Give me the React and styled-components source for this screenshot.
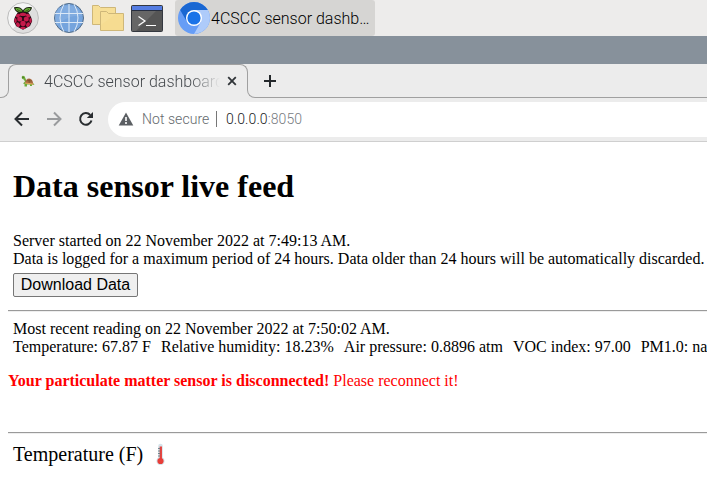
import React from "react";
import styled, { createGlobalStyle } from "styled-components";

const GlobalStyle = createGlobalStyle`
  html, body { margin: 0; padding: 0; overflow: hidden; background: #fff; }
  * { box-sizing: border-box; }
`;

const Screen = styled.div`
  width: 707px;
  height: 496px;
  overflow: hidden;
  background: #fff;
  color: #000;
  font-family: "Liberation Serif", serif;
`;

const Taskbar = styled.div`
  display: flex;
  align-items: center;
  height: 36px;
  padding-left: 6px;
  background: #edeceb;
`;

const Launcher = styled.div`
  display: flex;
  width: ${(p) => p.$w || 32}px;
  height: 36px;
  margin-right: ${(p) => p.$gap || 0}px;
  svg { display: block; }
`;

const TaskButton = styled.div`
  display: flex;
  align-items: center;
  width: 200px;
  height: 36px;
  padding-left: 3px;
  border-radius: 3px;
  background: #d6d5d3;
  svg { flex: none; }
`;

const TaskLabel = styled.span`
  font: 300 16px/36px Roboto, sans-serif;
  white-space: nowrap;
  margin-left: 1px;
  padding-top: 1px;
`;

const TitleBar = styled.div`
  height: 28px;
  background: #87919b;
`;

const TabStrip = styled.div`
  display: flex;
  height: 34px;
  background: #ececec;
`;

const StripEdge = styled.div`
  align-self: flex-end;
  height: 17px;
  border-bottom: 1px solid #a0a0a0;
  ${(p) =>
    p.$left
      ? "width: 9px; margin-right: -1px; border-right: 1px solid #a0a0a0; border-bottom-right-radius: 8px;"
      : "flex: 1; margin-left: -1px; border-left: 1px solid #a0a0a0; border-bottom-left-radius: 8px;"}
`;

const Tab = styled.div`
  display: flex;
  align-items: center;
  width: 240px;
  height: 17px;
  padding: 16px 10px 0 12px;
  border: 1px solid #a0a0a0;
  border-bottom: 0;
  border-radius: 8px 8px 0 0;
  svg { flex: none; }
`;

const TabTitle = styled.span`
  width: 176px;
  margin: 0 7px 0 9px;
  padding-top: 1px;
  overflow: hidden;
  white-space: nowrap;
  color: #45494d;
  font: 300 16px/24px Roboto, sans-serif;
  mask-image: linear-gradient(to right, #000 146px, transparent 176px);
`;

const NewTab = styled.div`
  align-self: flex-start;
  width: 14px;
  height: 14px;
  margin: 10px -29px 0 15px;
  svg { display: block; }
`;

const Toolbar = styled.div`
  display: flex;
  align-items: center;
  height: 44px;
  padding: 0 0 2px 14px;
  border-bottom: 1px solid #cfcfcf;
  background: #ececec;
`;

const NavIcon = styled.div`
  width: 16px;
  height: 16px;
  margin-right: 16px;
  svg { display: block; }
`;

const AddressBar = styled.div`
  display: flex;
  align-items: center;
  flex: 1;
  height: 35px;
  margin: 2px 0 0 -2px;
  padding: 0 0 1px 10px;
  border-radius: 18px 0 0 18px;
  background: #fff;
  font: 300 14px/20px Roboto, sans-serif;
  white-space: nowrap;
`;

const Security = styled.span`
  width: 75px;
  margin-left: 8px;
  padding-right: 7px;
  border-right: 1px solid #777;
  color: #65696d;
  line-height: 16px;
  letter-spacing: 0.06px;
`;

const Url = styled.span`
  margin-left: 9px;
  color: #202124;
  letter-spacing: 0.08px;
  span { color: #777b7f; }
`;

const Page = styled.main`
  padding-left: 8px;
  font-size: 16px;
  line-height: 18px;
  white-space: nowrap;
`;

const Title = styled.h1`
  margin: 0 0 27px 5px;
  padding-top: 26px;
  font-size: 32px;
  line-height: 37px;
`;

const Line = styled.div`
  margin-left: 5px;
`;

const Download = styled.button`
  display: block;
  width: 125px;
  height: 24px;
  margin: 5px 0 0 5px;
  padding: 0;
  border: 1px solid #767676;
  border-radius: 2px;
  background: #efefef;
  color: #000;
  font: 16px/20px "Liberation Sans", Arial, sans-serif;
`;

const Rule = styled.hr`
  height: 2px;
  margin: ${(p) => p.$top}px 0 8px;
  border: 0;
  border-top: 1px solid #9a9a9a;
  border-bottom: 1px solid #eee;
`;

const Readings = styled.div`
  display: flex;
  gap: 10px;
  margin-left: 5px;
`;

const Warning = styled.p`
  margin: 16px 0 0;
  color: #f00;
`;

const Section = styled.div`
  display: flex;
  align-items: center;
  margin: 9px 0 0 5px;
  font-size: 20px;
  line-height: 23px;
  svg { margin: -2px 0 0 10px; }
`;

function Raspberry() {
  return (
    <svg width="34" height="36" viewBox="0 0 34 36">
      <defs>
        <linearGradient id="disc" x2="1" y2="1">
          <stop offset=".5" stopColor="#f5f5f5" />
          <stop offset=".52" stopColor="#dedede" />
        </linearGradient>
      </defs>
      <circle cx="17" cy="18" r="15.4" fill="url(#disc)" stroke="#bbb" />
      <path d="M17 12C13 14 9 11 8.6 7.8C12 7 16 8 17 12C18 8 22 7 25.4 7.8C25 11 21 14 17 12Z" fill="#65ad35" stroke="#161b0b" strokeWidth="1.1" />
      <path d="M11 9.5L16 12M23 9.5L18 12" stroke="#315917" />
      <path d="M17 12.2L22.5 12.8L25 17L26.2 21L24 26L17 29.8L10 26L7.8 21L9 17L11.5 12.8Z" fill="#260812" />
      <g fill="#c51a4a">
        <ellipse cx="17" cy="14.4" rx="3.3" ry="1.7" />
        <ellipse cx="12" cy="15.6" rx="2.3" ry="1.6" transform="rotate(-35 12 15.6)" />
        <ellipse cx="22" cy="15.6" rx="2.3" ry="1.6" transform="rotate(35 22 15.6)" />
        <circle cx="13.7" cy="19" r="2.5" />
        <circle cx="20.3" cy="19" r="2.5" />
        <ellipse cx="9.5" cy="20.6" rx="1.2" ry="2.5" />
        <ellipse cx="24.5" cy="20.6" rx="1.2" ry="2.5" />
        <circle cx="17" cy="23.5" r="2.7" />
        <ellipse cx="12" cy="24.6" rx="1.8" ry="2.5" transform="rotate(-28 12 24.6)" />
        <ellipse cx="22" cy="24.6" rx="1.8" ry="2.5" transform="rotate(28 22 24.6)" />
        <ellipse cx="17" cy="28" rx="2.7" ry="1.2" />
      </g>
    </svg>
  );
}

function Globe() {
  return (
    <svg width="32" height="36" viewBox="0 0 32 36">
      <circle cx="16" cy="18" r="14.5" fill="#75a4dd" stroke="#526b86" />
      <path d="M5 8C14 3 25 5 30 16C22 15 10 18 4 26C1 19 1 13 5 8" fill="#8bb2e2" opacity=".55" />
      <path d="M2 13.5H30M2 22.5H30M16 4V32M11 4Q3 18 11 32M21 4Q29 18 21 32" fill="none" stroke="#dbe8f6" strokeWidth="1" />
    </svg>
  );
}

function Folders() {
  return (
    <svg width="32" height="36" viewBox="0 0 32 36" fill="#f7df97" stroke="#ceb779">
      <path d="M.5 24.5V5.5H6.5L8.5 7.5H23.5V24.5Z" />
      <path d="M8.5 30.5V11.5H14.5L16.5 13.5H31.5V30.5Z" />
      <path d="M9 25L24 14H31V30H9Z" fill="#f5d98a" stroke="none" opacity=".45" />
    </svg>
  );
}

function Terminal() {
  return (
    <svg width="32" height="36" viewBox="0 0 32 36">
      <rect x=".5" y="5.5" width="31" height="26" rx="1" fill="#555" stroke="#343840" />
      <path d="M1 31V11H25L5 31Z" fill="#666" />
      <path d="M1 6H31V10H1Z" fill="#557de2" />
      <path d="M1 10.5H31" stroke="#252d40" />
      <path d="M7.5 16.5L14 21L7.5 25.5M15 25.5H25" fill="none" stroke="#fff" strokeWidth="1.2" />
    </svg>
  );
}

function Chromium() {
  return (
    <svg width="32" height="36" viewBox="0 0 32 36">
      <circle cx="16" cy="18" r="16" fill="#669df6" />
      <path d="M2.15 10A16 16 0 0 1 29.85 10H16L9.1 22Z" fill="#1967d2" />
      <path d="M16 10H29.85A16 16 0 0 1 16 34L22.9 22Z" fill="#aecbfa" />
      <circle cx="16" cy="18" r="8" fill="#fff" />
      <circle cx="16" cy="18" r="6.6" fill="#1a73e8" />
    </svg>
  );
}

function Turtle() {
  return (
    <svg width="14" height="14" viewBox="0 0 14 14">
      <path d="M4 7.5L2.7 5.5L1 4.8Q.2 2 2 1.8Q4 1.8 4.3 4L5.5 7L12 9L13.5 11L11 10.5V12H9V10.5H6V12.5H3.5V10L2 9.5Z" fill="#6dab38" />
      <path d="M4.3 9Q4.5 4.4 8.2 4.4Q11.8 4.5 12.2 10Z" fill="#a86b40" />
      <path d="M4 9L12.2 10.2" stroke="#e2a45e" strokeWidth="1.2" />
      <path d="M6.2 6.5L10.8 7M8.2 5V9" stroke="#754729" strokeWidth=".6" />
      <circle cx="2" cy="3.2" r=".5" fill="#263318" />
    </svg>
  );
}

function Thermometer() {
  return (
    <svg width="15" height="22" viewBox="0 0 15 22">
      <path d="M5.2 14.6V3A2.3 2.3 0 0 1 9.8 3V14.6A4.1 4.1 0 1 1 5.2 14.6Z" fill="#d4e3ea" />
      <path d="M7.8 3.5V18" stroke="#e83e39" strokeWidth="2.3" />
      <circle cx="7.5" cy="18" r="3.1" fill="#e83e39" />
      <path d="M5 5.5H7.4M5 8H7.4M5 10.5H7.4M5 13H7.4" stroke="#66787f" strokeWidth=".9" />
    </svg>
  );
}

export default function App() {
  return (
    <Screen>
      <GlobalStyle />
      <Taskbar>
        <Launcher $w={34} $gap={13}><Raspberry /></Launcher>
        <Launcher $gap={7}><Globe /></Launcher>
        <Launcher $gap={7}><Folders /></Launcher>
        <Launcher $gap={12}><Terminal /></Launcher>
        <TaskButton>
          <Chromium />
          <TaskLabel>4CSCC sensor dashb…</TaskLabel>
        </TaskButton>
      </Taskbar>
      <TitleBar />
      <TabStrip>
        <StripEdge $left />
        <Tab>
          <Turtle />
          <TabTitle>4CSCC sensor dashboard</TabTitle>
          <svg width="10" height="10" viewBox="0 0 10 10">
            <path d="M1.2 1.2L8.8 8.8M8.8 1.2L1.2 8.8" stroke="#303438" strokeWidth="1.8" />
          </svg>
        </Tab>
        <NewTab>
          <svg width="14" height="14" viewBox="0 0 14 14">
            <path d="M7 1V13M1 7H13" stroke="#24282b" strokeWidth="2" />
          </svg>
        </NewTab>
        <StripEdge />
      </TabStrip>
      <Toolbar>
        <NavIcon>
          <svg width="16" height="16" viewBox="0 0 16 16" fill="none" stroke="#292d30" strokeWidth="2">
            <path d="M15 8H2M8 1.5L1.5 8L8 14.5" />
          </svg>
        </NavIcon>
        <NavIcon>
          <svg width="16" height="16" viewBox="0 0 16 16" fill="none" stroke="#999b9d" strokeWidth="2">
            <path d="M1 8H14M8 1.5L14.5 8L8 14.5" />
          </svg>
        </NavIcon>
        <NavIcon>
          <svg width="16" height="16" viewBox="0 0 16 16">
            <path d="M13.5 9.5A5.8 5.8 0 1 1 12.2 4" fill="none" stroke="#292d30" strokeWidth="2" />
            <path d="M15 .9V7H8.8Z" fill="#292d30" />
          </svg>
        </NavIcon>
        <AddressBar>
          <svg width="16" height="16" viewBox="0 0 16 16">
            <path d="M8 1.5L15.3 14.5H.7Z" fill="#5b5f63" />
            <path d="M8 6V10M8 11V13" stroke="#fff" strokeWidth="1.6" />
          </svg>
          <Security>Not secure</Security>
          <Url>0.0.0.0<span>:8050</span></Url>
        </AddressBar>
      </Toolbar>
      <Page>
        <Title>Data sensor live feed</Title>
        <Line>Server started on 22 November 2022 at 7:49:13 AM.</Line>
        <Line>Data is logged for a maximum period of 24 hours. Data older than 24 hours will be automatically discarded.</Line>
        <Download>Download Data</Download>
        <Rule $top={13} />
        <Line>Most recent reading on 22 November 2022 at 7:50:02 AM.</Line>
        <Readings>
          <span>Temperature: 67.87 F</span>
          <span>Relative humidity: 18.23%</span>
          <span>Air pressure: 0.8896 atm</span>
          <span>VOC index: 97.00</span>
          <span>PM1.0: nan</span>
        </Readings>
        <Warning><b>Your particulate matter sensor is disconnected!</b> Please reconnect it!</Warning>
        <Rule $top={42} />
        <Section>Temperature (F)<Thermometer /></Section>
      </Page>
    </Screen>
  );
}
